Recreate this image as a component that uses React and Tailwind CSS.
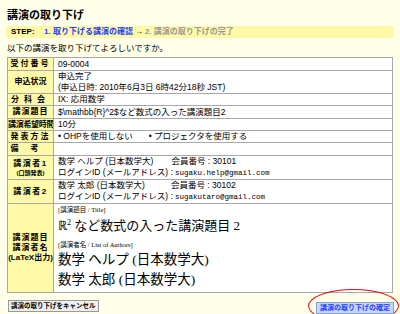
export default function App() {
  const serif = { fontFamily: '"Liberation Serif", "Noto Sans CJK JP", serif' };
  const mono = { fontFamily: '"Liberation Mono", monospace' };
  const lab = "bg-[#fffaa8] border border-[#a8a8a8] text-center font-bold text-[8px] leading-[10px] align-middle whitespace-nowrap p-0 overflow-hidden";
  const val = "bg-white border border-[#a8a8a8] text-[8.5px] leading-[11px] align-middle pl-[4px] py-0 whitespace-nowrap overflow-hidden";
  return (
    <div className="w-[400px] h-[314px] bg-[#ffffea] overflow-hidden text-black" style={{ fontFamily: '"Liberation Sans", "Noto Sans CJK JP", sans-serif' }}>
      <div className="pt-[8px] pl-[7px] text-[11px] leading-[14px] font-bold">講演の取り下げ</div>
      <div className="mt-[4px] mx-[6px] h-[12px] bg-[#fffaaa] flex items-center pl-[5px] text-[8px] leading-[10px] font-bold">
        <span className="w-[33px]">STEP:</span>
        <span className="text-[#2a3cff]">1. 取り下げる講演の確認</span>
        <span className="mx-[2px]">→</span>
        <span className="text-[#9a9a9a]">2. 講演の取り下げの完了</span>
      </div>
      <div className="mt-[4px] pl-[7px] text-[8.5px] leading-[12px]" style={serif}>以下の講演を取り下げてよろしいですか。</div>
      <table className="mt-[3px] ml-[7px] w-[386px] border-collapse border border-[#777]" style={{ tableLayout: 'fixed' }}>
        <colgroup><col className="w-[46px]" /><col /></colgroup>
        <tbody>
          <tr className="h-[13px]"><td className={lab + " tracking-[2px]"}>受付番号</td><td className={val}>09-0004</td></tr>
          <tr className="h-[22px]"><td className={lab}>申込状況</td><td className={val}>申込完了<br />(申込日時: 2010年6月3日 6時42分18秒 JST)</td></tr>
          <tr className="h-[12px]"><td className={lab + " tracking-[5px]"}>分科会</td><td className={val}>IX: 応用数学</td></tr>
          <tr className="h-[13px]"><td className={lab + " tracking-[1px]"}>講演題目</td><td className={val}>$\mathbb{'{'}R{'}'}^2$など数式の入った講演題目2</td></tr>
          <tr className="h-[12px]"><td className={lab + " text-[7px] tracking-[-0.3px]"}>講演希望時間</td><td className={val}>10分</td></tr>
          <tr className="h-[12px]"><td className={lab + " tracking-[2px]"}>発表方法</td><td className={val}><span>• OHPを使用しない</span><span className="ml-[16px]">• プロジェクタを使用する</span></td></tr>
          <tr className="h-[13px]"><td className={lab + " tracking-[12px]"}>備考</td><td className={val}></td></tr>
          <tr className="h-[23px]"><td className={lab}><span className="tracking-[1.5px]">講演者1</span><br /><span className="text-[6px] leading-[8px] block">(口頭発表)</span></td><td className={val}><span>数学 ヘルプ (日本数学大)</span><span className="ml-[18px]">会員番号 : 30101</span><br />ログインID (メールアドレス) : <span style={mono} className="text-[7.5px]">sugaku.help@gmail.com</span></td></tr>
          <tr className="h-[22px]"><td className={lab + " tracking-[1.5px]"}>講演者2</td><td className={val}><span>数学 太郎 (日本数学大)</span><span className="ml-[26px]">会員番号 : 30102</span><br />ログインID (メールアドレス) : <span style={mono} className="text-[7.5px]">sugakutaro@gmail.com</span></td></tr>
          <tr className="h-[89px]">
            <td className={lab + " text-[7.5px] leading-[10px]"}><span className="tracking-[1px]">講演題目</span><br /><span className="tracking-[1px]">講演者名</span><br />(LaTeX出力)</td>
            <td className="bg-white border border-[#a8a8a8] align-top pl-[4px] pt-[1px] pb-0 whitespace-nowrap overflow-hidden" style={serif}>
              <div className="text-[6.5px] leading-[9px]">[講演題目 / Title]</div>
              <div className="text-[13px] leading-[19px] mt-[2px]">ℝ<span className="text-[8px] relative top-[-5px]">2</span> など数式の入った講演題目 2</div>
              <div className="text-[6.5px] leading-[9px] mt-[3px]">[講演者名 / List of Authors]</div>
              <div className="text-[13.5px] leading-[20px] mt-[1px]">数学 ヘルプ (日本数学大)</div>
              <div className="text-[13.5px] leading-[19px]">数学 太郎 (日本数学大)</div>
            </td>
          </tr>
        </tbody>
      </table>
      <div className="flex justify-between items-center mt-[1px] px-[8px]">
        <button className="h-[12px] px-[2px] bg-[#f0f0f0] border border-[#999] text-[6.5px] leading-[10px] font-bold">講演の取り下げをキャンセル</button>
        <div className="relative mr-[-2px] mt-[-1px]">
          <div className="absolute -left-[8px] -right-[5px] -top-[4px] -bottom-[6px] border-[1.5px] border-[#d81414] rounded-[50%]"></div>
          <button className="relative h-[12px] px-[3px] bg-[#c4d8ff] border border-[#8aa0d0] text-[7px] leading-[10px] font-bold text-[#2a3cff]">講演の取り下げの確定</button>
        </div>
      </div>
    </div>
  );
}
